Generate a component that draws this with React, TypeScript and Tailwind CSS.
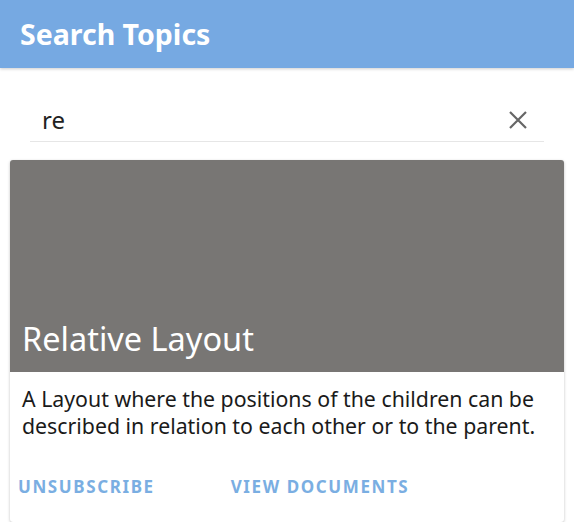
export default function App() {
  return (
    <div className="flex h-[522px] w-[574px] flex-col overflow-hidden bg-white font-['Noto_Sans',sans-serif]">
      <header className="flex h-[68px] shrink-0 items-center bg-[#76a9e2] px-5 shadow-[0_1px_3px_rgba(0,0,0,0.2)]">
        <h1 className="text-[28.5px] font-bold text-white">Search Topics</h1>
      </header>

      <div className="mx-[30px] mt-[30px] flex h-[44px] items-center border-b border-[#e6e6e6] pl-[12px] pr-[16px]">
        <span className="flex-1 text-[24px] text-[#222]">re</span>
        <svg width="20" height="20" viewBox="0 0 20 20" className="text-[#666]">
          <path d="M2 2L18 18M18 2L2 18" stroke="currentColor" strokeWidth="2.2" fill="none" />
        </svg>
      </div>

      <div className="mx-[10px] mt-[18px] flex flex-col overflow-hidden rounded-[3px] bg-white shadow-[0_1px_3px_rgba(0,0,0,0.25)]">
        <div className="flex h-[212px] items-end bg-[#787674] px-[12px] pb-[17px]">
          <span className="text-[32.5px] leading-none text-white">Relative Layout</span>
        </div>
        <p className="px-[12px] pt-[13px] text-[21.3px] leading-[27px] text-[#1a1a1a]">
          A Layout where the positions of the children can be described in relation to each other or to the parent.
        </p>
        <div className="flex gap-[76px] px-[8px] pt-[35px] pb-[22px]">
          <button className="text-[17px] font-bold tracking-[1.6px] text-[#7aaee2]">UNSUBSCRIBE</button>
          <button className="text-[17px] font-bold tracking-[1.6px] text-[#7aaee2]">VIEW DOCUMENTS</button>
        </div>
      </div>
    </div>
  );
}
